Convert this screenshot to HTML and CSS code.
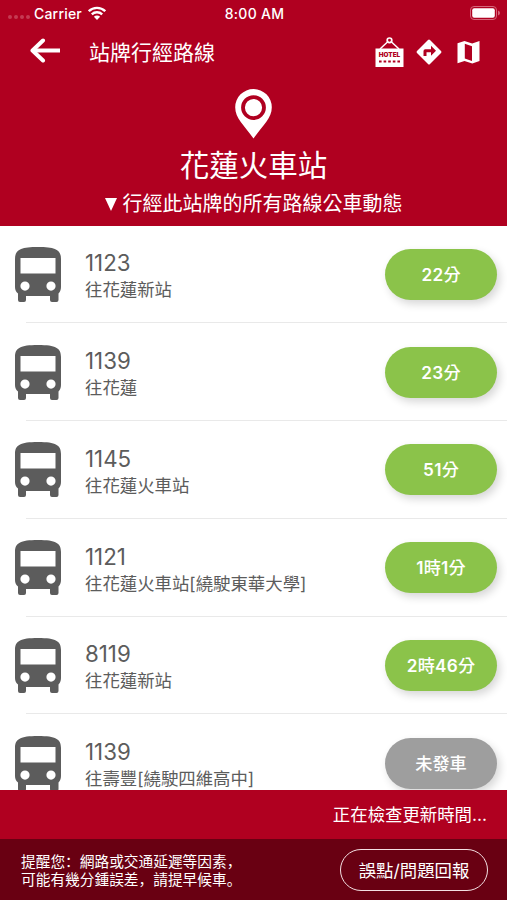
FILE: index.html
```html
<!DOCTYPE html>
<html lang="zh-Hant">
<head>
    <meta charset="UTF-8">
    <meta name="viewport" content="width=device-width, initial-scale=1.0">
    <title>站牌行經路線</title>
    <link rel="stylesheet" href="styles.css">
</head>
<body>
    <svg class="defs" aria-hidden="true">
        <symbol id="bus" viewBox="0 0 46 55">
            <path fill-rule="evenodd" d="M0 12C0 3 5 0 23 0s23 3 23 12v28c0 3-1 5-2.500 6.500V53q0 2-2 2h-4.500q-2 0-2-2v-4H11v4q0 2-2 2H5q-2 0-2-2v-6.500C1 45 0 43 0 40zM5.500 11v15.500h35V11zM10 34.500a4.600 4.600 0 1 0 0 9.200a4.600 4.600 0 1 0 0-9.200zM36 34.500a4.600 4.600 0 1 0 0 9.200a4.600 4.600 0 1 0 0-9.200z"/>
        </symbol>
    </svg>
    <header>
        <div class="status">
            <div class="carrier">
                <i class="dots"><b></b><b></b><b></b><b></b></i>
                <span>Carrier</span>
                <svg width="18" height="14" viewBox="0 0 18 14" fill="none" stroke="#fff" stroke-width="2.3">
                    <path d="M.8 5.200a11.700 11.700 0 0 1 16.400 0M3.800 8.400a7.400 7.400 0 0 1 10.400 0"/>
                    <path fill="#fff" stroke="none" d="M5.900 10.800a4.400 4.400 0 0 1 6.200 0L9 14z"/>
                </svg>
            </div>
            <span class="clock">8:00 AM</span>
            <svg class="battery" width="31" height="14" viewBox="0 0 31 14">
                <rect x=".5" y=".5" width="26" height="13" rx="3.500" fill="none" stroke="#d5667a"/>
                <rect x="2.200" y="2.200" width="22.600" height="9.600" rx="2" fill="#fff"/>
                <path fill="#d5667a" d="M28 4.500q2 .8 2 2.500t-2 2.500z"/>
            </svg>
        </div>
        <nav>
            <svg class="back" width="30" height="25" viewBox="0 0 30 25" fill="none" stroke="#fff" stroke-width="4" stroke-linecap="round" stroke-linejoin="round">
                <path d="M13 2.500L2.500 12.500L13 22.500"/>
                <path stroke-linecap="butt" d="M3 12.500h27"/>
            </svg>
            <h1>站牌行經路線</h1>
            <svg class="hotel" width="29" height="30" viewBox="0 0 29 30">
                <path fill="none" stroke="#fff" stroke-width="1.500" d="M5 12l8-7.500M24 12l-8-7.500"/>
                <circle cx="14.500" cy="3.300" r="2.300" fill="none" stroke="#fff" stroke-width="1.700"/>
                <path fill="#fff" d="M.5 11.500h28V30H.5z"/>
                <text x="14.500" y="20" textLength="21.500" lengthAdjust="spacingAndGlyphs">HOTEL</text>
                <path stroke="#b00020" stroke-width="2.200" stroke-dasharray="2.600 2" d="M4 24.500h21"/>
            </svg>
            <svg class="turn" width="26" height="26" viewBox="0 0 26 26" fill="#fff">
                <path d="M12 1q1-1 2 0l11 11q1 1 0 2L14 25q-1 1-2 0L1 14q-1-1 0-2z"/>
                <path fill="#b00020" d="M7.500 17v-5q0-1.800 1.800-1.800h5.700V6.700l5 5-5 5v-3.500h-4.500V17z"/>
            </svg>
            <svg class="map" width="23" height="24" viewBox="0 0 23 24">
                <path fill="#fff" fill-rule="evenodd" d="M.5 3.300L7.500 1l7.700 2.600L22.500 1v20l-7.200 2.400L7.500 21 .5 23.300zM7.800 3.800v14.700l7.200 2.600V6.300z"/>
            </svg>
        </nav>
        <div class="station">
            <svg width="37" height="50" viewBox="0 0 37 50">
                <path fill="#fff" fill-rule="evenodd" d="M18.500 0A18.300 18.300 0 0 0 .2 18.300C.2 29.500 9 36 18.500 49.500C28 36 36.800 29.500 36.800 18.300A18.300 18.300 0 0 0 18.500 0zM18.500 6.200a12.400 12.400 0 1 1 0 24.800a12.400 12.400 0 1 1 0-24.800zM18.500 10a8.600 8.600 0 1 0 0 17.200a8.600 8.600 0 1 0 0-17.200z"/>
            </svg>
            <h2>花蓮火車站</h2>
            <p><i class="triangle"></i>行經此站牌的所有路線公車動態</p>
        </div>
    </header>

    <main>
        <div class="row">
            <svg class="bus"><use href="#bus"/></svg>
            <div class="route"><b>1123</b><span>往花蓮新站</span></div>
            <div class="pill"><b>22</b>分</div>
        </div>
        <div class="row">
            <svg class="bus"><use href="#bus"/></svg>
            <div class="route"><b>1139</b><span>往花蓮</span></div>
            <div class="pill"><b>23</b>分</div>
        </div>
        <div class="row">
            <svg class="bus"><use href="#bus"/></svg>
            <div class="route"><b>1145</b><span>往花蓮火車站</span></div>
            <div class="pill"><b>51</b>分</div>
        </div>
        <div class="row">
            <svg class="bus"><use href="#bus"/></svg>
            <div class="route"><b>1121</b><span>往花蓮火車站[繞駛東華大學]</span></div>
            <div class="pill"><b>1</b>時<b>1</b>分</div>
        </div>
        <div class="row">
            <svg class="bus"><use href="#bus"/></svg>
            <div class="route"><b>8119</b><span>往花蓮新站</span></div>
            <div class="pill"><b>2</b>時<b>46</b>分</div>
        </div>
        <div class="row">
            <svg class="bus"><use href="#bus"/></svg>
            <div class="route"><b>1139</b><span>往壽豐[繞駛四維高中]</span></div>
            <div class="pill waiting">未發車</div>
        </div>
    </main>

    <div class="updating">正在檢查更新時間...</div>
    <footer>
        <p lang="zh-Hans">提醒您：網路或交通延遲等因素，<br>可能有幾分鍾誤差，請提早候車。</p>
        <button>誤點/問題回報</button>
    </footer>
</body>
</html>
```
FILE: styles.css
```css
* {
    box-sizing: border-box;
}
body {
    margin: 0;
    height: 900px;
    overflow: hidden;
    display: flex;
    flex-direction: column;
    background-color: #fff;
    font-family: Inter, "Noto Sans CJK TC", sans-serif;
    color: #fff;
}
h1, h2, p {
    margin: 0;
    font-weight: normal;
}
svg {
    display: block;
    flex: none;
}
.defs {
    position: absolute;
    width: 0;
    height: 0;
}
header {
    flex: none;
    height: 225.5px;
    background-color: #b00020;
}
.status {
    display: grid;
    grid-template-columns: 1fr auto 1fr;
    align-items: center;
    height: 26px;
    padding: 0 6px 0 8px;
    font-size: 14px;
    font-weight: 500;
}
.carrier {
    display: flex;
    align-items: center;
}
.carrier span {
    width: 54px;
    letter-spacing: 0.2px;
}
.clock {
    letter-spacing: 0.3px;
}
.dots {
    display: flex;
    gap: 2px;
    width: 26px;
    padding-top: 8px;
}
.dots b {
    width: 4px;
    height: 4px;
    border-radius: 50%;
    background-color: #c53a52;
}
.battery {
    justify-self: end;
}
nav {
    display: flex;
    align-items: center;
    height: 52px;
    padding: 0 27px 0 30px;
}
.back {
    margin-bottom: 3px;
}
h1 {
    flex: 1;
    padding: 1px 0 0 29px;
    font-size: 21px;
    line-height: 30px;
}
.hotel {
    margin-right: 12px;
}
.hotel text {
    fill: #b00020;
    font-size: 6.2px;
    font-weight: 900;
    text-anchor: middle;
}
.turn {
    margin-right: 15px;
}
.station {
    display: flex;
    flex-direction: column;
    align-items: center;
    padding-top: 11px;
}
h2 {
    margin-top: 4px;
    font-size: 29.5px;
    line-height: 44px;
}
.station p {
    display: flex;
    align-items: center;
    margin-top: 2px;
    font-size: 20px;
    line-height: 30px;
}
.triangle {
    margin-right: 6px;
    border-top: 13px solid #fff;
    border-left: 6.5px solid transparent;
    border-right: 6.5px solid transparent;
}
main {
    flex: 1;
    min-height: 0;
    overflow: hidden;
}
.row {
    position: relative;
    display: flex;
    align-items: center;
    height: 97.75px;
    padding: 0 10px 0 15px;
    color: #5c5c5c;
}
.row::after {
    content: "";
    position: absolute;
    left: 26px;
    right: 0;
    bottom: 0;
    height: 1px;
    background-color: #e9e9e9;
}
.bus {
    width: 46px;
    height: 55px;
    fill: #5c5c5c;
}
.route {
    flex: 1;
    display: flex;
    flex-direction: column;
    margin-left: 24px;
    padding-top: 4px;
}
.route b {
    font-size: 22.3px;
    font-weight: normal;
    line-height: 28px;
}
.route span {
    font-size: 17.4px;
    line-height: 26px;
}
.pill {
    width: 112px;
    height: 51px;
    border-radius: 26px;
    background-color: #8bc34a;
    box-shadow: 3px 4px 9px rgba(0, 0, 0, 0.16);
    color: #fff;
    font-size: 17.2px;
    font-weight: 500;
    line-height: 52px;
    text-align: center;
}
.pill b {
    font-weight: 600;
    letter-spacing: 0.3px;
}
.waiting {
    background-color: #9e9e9e;
}
.updating {
    flex: none;
    height: 49px;
    padding-right: 20px;
    background-color: #b00020;
    font-size: 17.4px;
    line-height: 49px;
    text-align: right;
}
footer {
    flex: none;
    display: flex;
    align-items: center;
    justify-content: space-between;
    height: 61px;
    padding: 0 19px 0 21px;
    background-color: #690012;
}
footer p {
    font-family: "Noto Sans CJK SC", sans-serif;
    font-size: 14.7px;
    line-height: 17.5px;
    white-space: nowrap;
}
footer button {
    width: 148px;
    height: 42px;
    padding: 0;
    border: 1.5px solid #f3dfe2;
    border-radius: 21px;
    background: none;
    color: #fff;
    font-family: inherit;
    font-size: 17.4px;
}
```
